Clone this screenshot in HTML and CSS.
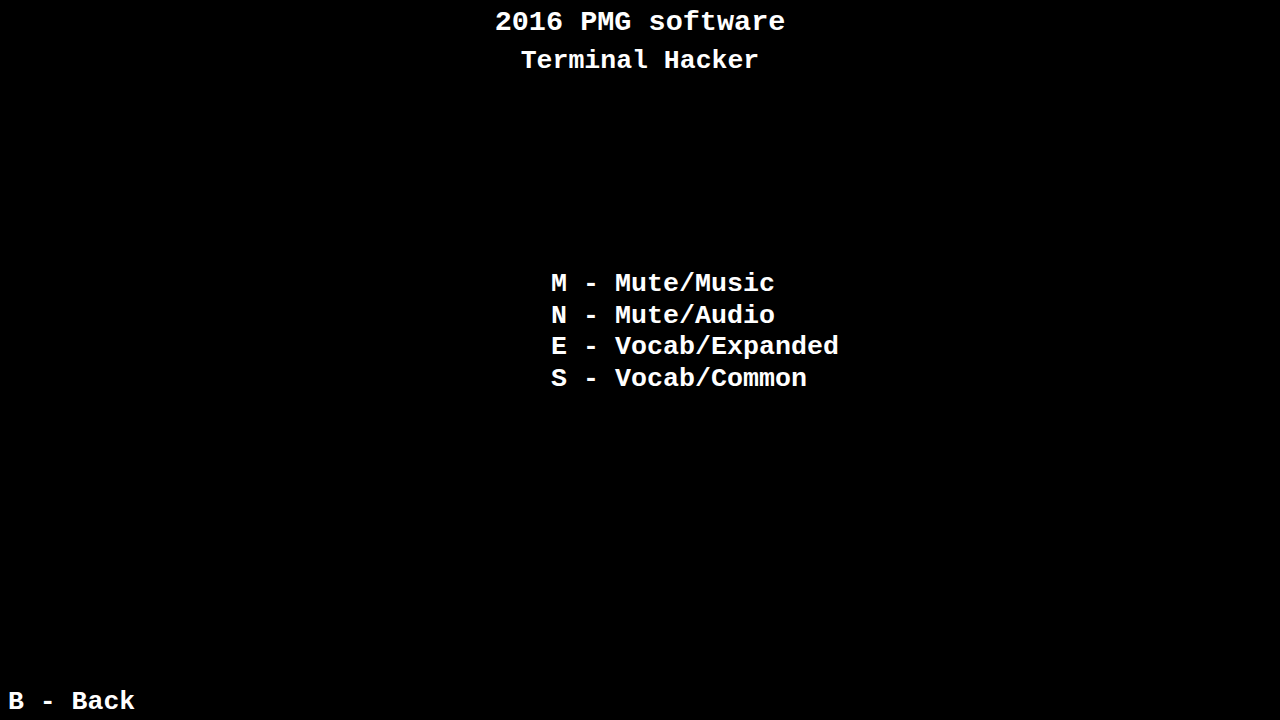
FILE: index.html
```html
<!DOCTYPE html>
<html>
<head>
<meta charset="utf-8">
<link rel="stylesheet" href="styles.css">
</head>
<body>
<div class="screen">
  <header class="head">
    <div class="title">2016 PMG software</div>
    <div class="subtitle">Terminal Hacker</div>
  </header>
  <ul class="menu">
    <li class="item">M - Mute/Music</li>
    <li class="item">N - Mute/Audio</li>
    <li class="item">E - Vocab/Expanded</li>
    <li class="item">S - Vocab/Common</li>
  </ul>
  <div class="back">B - Back</div>
</div>
</body>
</html>
```
FILE: styles.css
```css
html, body {
  margin: 0;
  padding: 0;
  background: #000;
}
.screen {
  width: 1280px;
  height: 720px;
  box-sizing: border-box;
  padding-top: 4px;
  padding-bottom: 2px;
  display: flex;
  flex-direction: column;
  color: #fff;
  font-family: "Liberation Mono", "DejaVu Sans Mono", monospace;
  font-weight: bold;
}
.head {
  display: flex;
  flex-direction: column;
  align-items: center;
}
.title {
  font-size: 28.5px;
  line-height: 38px;
  white-space: nowrap;
}
.subtitle {
  font-size: 26.5px;
  line-height: 38px;
  white-space: nowrap;
}
.menu {
  list-style: none;
  margin: 189px 0 0 0;
  padding: 0 0 0 551px;
  font-size: 26.67px;
  line-height: 31.5px;
}
.item {
  white-space: pre;
}
.back {
  margin-top: auto;
  padding-left: 8px;
  font-size: 26.5px;
  line-height: 32px;
  white-space: pre;
}
```
